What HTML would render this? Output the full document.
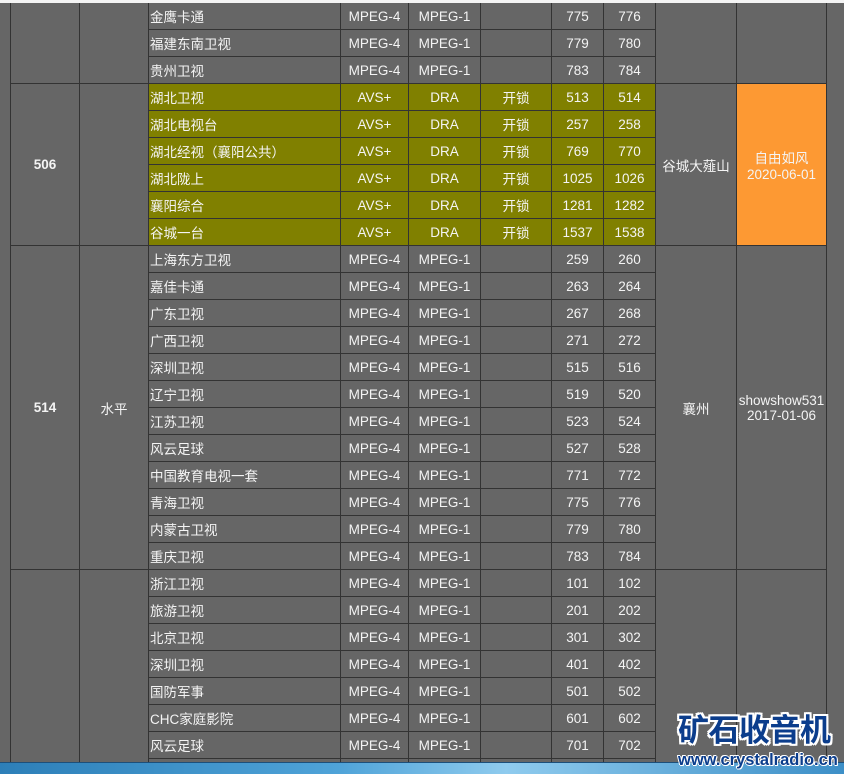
<!DOCTYPE html>
<html><head><meta charset="utf-8"><style>
html,body{margin:0;padding:0;width:844px;height:774px;overflow:hidden;background:#666;}
body{position:relative;font-family:"Liberation Sans","Noto Sans CJK SC",sans-serif;}
.wrap{position:absolute;left:0;top:0;width:844px;height:774px;overflow:hidden}
.top{position:absolute;left:0;top:0;width:844px;height:3px;background:#f4f4f4;z-index:3}
table{position:absolute;left:10px;top:2px;border-collapse:collapse;table-layout:fixed;width:817px;color:#f4f4f4;font-size:13.5px;}
td{border:1px solid #333;height:26px;padding:0;text-align:center;white-space:nowrap;overflow:hidden;}
td.n{text-align:left;padding-left:1px}
tr.o td.c{background:#808000}
td.b{font-weight:bold}
.org{background:#fd9933}
.task{position:absolute;left:0;top:762px;width:844px;height:12px;background:linear-gradient(90deg,#2d7fb8,#4fa3d8 40%,#8fcbee 60%,#3d8fc7);z-index:4;border-top:1px solid #1d4f7a}
.logo{position:absolute;left:678px;top:708px;z-index:5;color:#0b3d8c;font-weight:bold;font-family:"Noto Sans CJK SC",sans-serif;font-size:31px;line-height:40px;letter-spacing:-0.5px;
text-shadow:2px 0 #fff,-2px 0 #fff,0 2px #fff,0 -2px #fff,2px 2px #fff,-2px -2px #fff,2px -2px #fff,-2px 2px #fff;}
.url{position:absolute;left:678px;top:751px;z-index:5;color:#0b3d8c;font-weight:bold;font-size:16.5px;
text-shadow:1px 0 #fff,-1px 0 #fff,0 1px #fff,0 -1px #fff,1px 1px #fff,-1px -1px #fff;}
</style></head><body>
<div class="wrap">
<div class="top"></div>
<table>
<colgroup><col style="width:69px"><col style="width:69px"><col style="width:192px"><col style="width:68px"><col style="width:72px"><col style="width:71px"><col style="width:52px"><col style="width:52px"><col style="width:81px"><col style="width:90px"></colgroup>
<tr><td rowspan="3"></td><td rowspan="3"></td><td class="n">金鹰卡通</td><td>MPEG-4</td><td>MPEG-1</td><td></td><td>775</td><td>776</td><td rowspan="3"></td><td rowspan="3"></td></tr>
<tr><td class="n">福建东南卫视</td><td>MPEG-4</td><td>MPEG-1</td><td></td><td>779</td><td>780</td></tr>
<tr><td class="n">贵州卫视</td><td>MPEG-4</td><td>MPEG-1</td><td></td><td>783</td><td>784</td></tr>
<tr class="o"><td rowspan="6" class="b">506</td><td rowspan="6"></td><td class="n c">湖北卫视</td><td class="c">AVS+</td><td class="c">DRA</td><td class="c">开锁</td><td class="c">513</td><td class="c">514</td><td rowspan="6">谷城大薤山</td><td rowspan="6" class="org">自由如风<br>2020-06-01</td></tr>
<tr class="o"><td class="n c">湖北电视台</td><td class="c">AVS+</td><td class="c">DRA</td><td class="c">开锁</td><td class="c">257</td><td class="c">258</td></tr>
<tr class="o"><td class="n c">湖北经视（襄阳公共）</td><td class="c">AVS+</td><td class="c">DRA</td><td class="c">开锁</td><td class="c">769</td><td class="c">770</td></tr>
<tr class="o"><td class="n c">湖北陇上</td><td class="c">AVS+</td><td class="c">DRA</td><td class="c">开锁</td><td class="c">1025</td><td class="c">1026</td></tr>
<tr class="o"><td class="n c">襄阳综合</td><td class="c">AVS+</td><td class="c">DRA</td><td class="c">开锁</td><td class="c">1281</td><td class="c">1282</td></tr>
<tr class="o"><td class="n c">谷城一台</td><td class="c">AVS+</td><td class="c">DRA</td><td class="c">开锁</td><td class="c">1537</td><td class="c">1538</td></tr>
<tr><td rowspan="12" class="b">514</td><td rowspan="12">水平</td><td class="n">上海东方卫视</td><td>MPEG-4</td><td>MPEG-1</td><td></td><td>259</td><td>260</td><td rowspan="12">襄州</td><td rowspan="12">showshow531<br>2017-01-06</td></tr>
<tr><td class="n">嘉佳卡通</td><td>MPEG-4</td><td>MPEG-1</td><td></td><td>263</td><td>264</td></tr>
<tr><td class="n">广东卫视</td><td>MPEG-4</td><td>MPEG-1</td><td></td><td>267</td><td>268</td></tr>
<tr><td class="n">广西卫视</td><td>MPEG-4</td><td>MPEG-1</td><td></td><td>271</td><td>272</td></tr>
<tr><td class="n">深圳卫视</td><td>MPEG-4</td><td>MPEG-1</td><td></td><td>515</td><td>516</td></tr>
<tr><td class="n">辽宁卫视</td><td>MPEG-4</td><td>MPEG-1</td><td></td><td>519</td><td>520</td></tr>
<tr><td class="n">江苏卫视</td><td>MPEG-4</td><td>MPEG-1</td><td></td><td>523</td><td>524</td></tr>
<tr><td class="n">风云足球</td><td>MPEG-4</td><td>MPEG-1</td><td></td><td>527</td><td>528</td></tr>
<tr><td class="n">中国教育电视一套</td><td>MPEG-4</td><td>MPEG-1</td><td></td><td>771</td><td>772</td></tr>
<tr><td class="n">青海卫视</td><td>MPEG-4</td><td>MPEG-1</td><td></td><td>775</td><td>776</td></tr>
<tr><td class="n">内蒙古卫视</td><td>MPEG-4</td><td>MPEG-1</td><td></td><td>779</td><td>780</td></tr>
<tr><td class="n">重庆卫视</td><td>MPEG-4</td><td>MPEG-1</td><td></td><td>783</td><td>784</td></tr>
<tr><td rowspan="8"></td><td rowspan="8"></td><td class="n">浙江卫视</td><td>MPEG-4</td><td>MPEG-1</td><td></td><td>101</td><td>102</td><td rowspan="8" style="vertical-align:bottom">襄樊</td><td rowspan="8"></td></tr>
<tr><td class="n">旅游卫视</td><td>MPEG-4</td><td>MPEG-1</td><td></td><td>201</td><td>202</td></tr>
<tr><td class="n">北京卫视</td><td>MPEG-4</td><td>MPEG-1</td><td></td><td>301</td><td>302</td></tr>
<tr><td class="n">深圳卫视</td><td>MPEG-4</td><td>MPEG-1</td><td></td><td>401</td><td>402</td></tr>
<tr><td class="n">国防军事</td><td>MPEG-4</td><td>MPEG-1</td><td></td><td>501</td><td>502</td></tr>
<tr><td class="n">CHC家庭影院</td><td>MPEG-4</td><td>MPEG-1</td><td></td><td>601</td><td>602</td></tr>
<tr><td class="n">风云足球</td><td>MPEG-4</td><td>MPEG-1</td><td></td><td>701</td><td>702</td></tr>
<tr><td class="n">&nbsp;</td><td></td><td></td><td></td><td></td><td></td></tr>
</table>
<div class="logo">矿石收音机</div>
<div class="url">www.crystalradio.cn</div>
<div class="task"></div>
</div>
</body></html>
